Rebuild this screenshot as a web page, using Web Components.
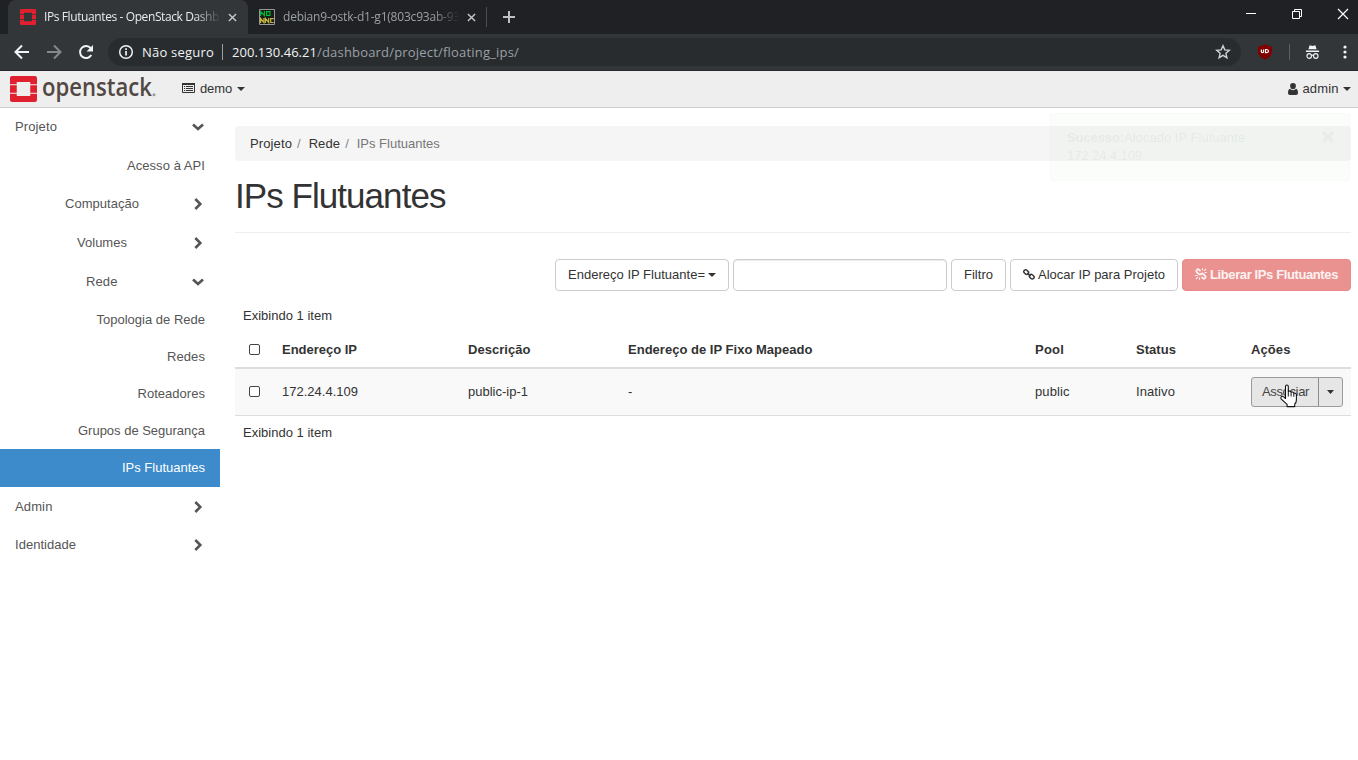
<!DOCTYPE html>
<html lang="pt-BR">
<head>
<meta charset="utf-8">
<title>IPs Flutuantes - OpenStack Dashboard</title>
<style>
html,body{margin:0;height:100%;overflow:hidden;background:#fff}
body{font:13px/18px "Liberation Sans",Arial,sans-serif;color:#333}
</style>
</head>
<body>
<os-app></os-app>
<script>
function define(name, markup, setup) {
  const template = document.createElement('template');
  template.innerHTML = markup;
  customElements.define(name, class extends HTMLElement {
    connectedCallback() {
      if (this.shadowRoot) return;
      this.attachShadow({mode: 'open'}).append(template.content.cloneNode(true));
      if (setup) setup(this, this.shadowRoot);
    }
  });
}

// Text label tracked to a given width.
define('t-label', `<style>:host{display:inline-block;white-space:pre;flex:none}span{display:inline-block}</style><span><slot></slot></span>`, (el, root) => {
  const span = root.querySelector('span');
  const w = parseFloat(el.getAttribute('w'));
  if (!w) return;
  const n = el.textContent.length;
  span.style.letterSpacing = ((w - span.getBoundingClientRect().width) / n) + 'px';
});

const icons = {
  logo: ['0 0 26 26', '<path fill="#e0202f" d="M2 0h22q2 0 2 2v6.200h-6.500V6h-13v2.200H0V2Q0 0 2 0zM0 9.300h6.500v7.400H0zM19.500 9.300H26v7.400h-6.500zM0 17.800h6.500V20h13v-2.200H26V24q0 2-2 2H2q-2 0-2-2z"/>'],
  close: ['0 0 10 10', '<path d="M1 1l8 8M9 1l-8 8" fill="none" stroke="currentColor" stroke-width="1.600"/>'],
  times: ['0 0 10 10', '<path d="M1 1l8 8M9 1l-8 8" fill="none" stroke="currentColor" stroke-width="2.800"/>'],
  plus: ['0 0 12 12', '<path d="M6 0v12M0 6h12" fill="none" stroke="currentColor" stroke-width="2"/>'],
  back: ['0 0 16 16', '<path d="M15 8H2M8 1.500L1.500 8 8 14.500" fill="none" stroke="currentColor" stroke-width="2"/>'],
  fwd: ['0 0 16 16', '<path d="M1 8h13M8 1.500L14.500 8 8 14.500" fill="none" stroke="currentColor" stroke-width="2"/>'],
  reload: ['0 0 16 16', '<path d="M13.300 11A6 6 0 1 1 12.700 4.200" fill="none" stroke="currentColor" stroke-width="2"/><path fill="currentColor" d="M15 1v6.500H8.500z"/>'],
  info: ['0 0 16 16', '<circle cx="8" cy="8" r="6.300" fill="none" stroke="currentColor" stroke-width="1.500"/><path fill="currentColor" d="M7.200 7h1.700v4.500H7.200zM7.200 4.300h1.700V6H7.200z"/>'],
  star: ['0 0 16 16', '<path d="M8 1.800l1.800 4.100 4.500.4-3.400 3 1 4.400L8 11.400l-3.900 2.300 1-4.400-3.400-3 4.500-.4z" fill="none" stroke="currentColor" stroke-width="1.400"/>'],
  incog: ['0 0 16 16', '<path fill="currentColor" d="M5 1.300l3 .7 3-.7 1.400 4H3.600zM1 6.500h14v1.400H1z"/><g fill="none" stroke="currentColor" stroke-width="1.200"><circle cx="4.500" cy="12" r="2.400"/><circle cx="11.500" cy="12" r="2.400"/><path d="M6.800 11.500q1.200-.8 2.400 0"/></g>'],
  dots: ['0 0 4 14', '<g fill="currentColor"><circle cx="2" cy="2" r="1.600"/><circle cx="2" cy="7" r="1.600"/><circle cx="2" cy="12" r="1.600"/></g>'],
  min: ['0 0 10 10', '<path fill="currentColor" d="M0 4h10v1H0z"/>'],
  restore: ['0 0 10 10', '<path d="M.5 2.500h7v7h-7zM2.500 2.500v-2h7v7h-2" fill="none" stroke="currentColor"/>'],
  wclose: ['0 0 10 10', '<path d="M0 0l10 10M10 0L0 10" fill="none" stroke="currentColor" stroke-width="1.200"/>'],
  list: ['0 0 13 10', '<path fill="none" stroke="currentColor" d="M.5.5h12v9H.5z"/><path fill="currentColor" d="M0 0h13v2H0zM2 3h1.200v1H2zm2 0h7v1H4zM2 5h1.200v1H2zm2 0h7v1H4zM2 7h1.200v1H2zm2 0h7v1H4z"/>'],
  caret: ['0 0 8 4', '<path fill="currentColor" d="M0 0h8L4 4z"/>'],
  user: ['0 0 10 12', '<path fill="currentColor" d="M5 0a2.900 2.900 0 0 1 2.900 3C7.900 5 6.600 6.300 5 6.300S2.100 5 2.100 3A2.900 2.900 0 0 1 5 0zM2 5.700C3.500 7.600 6.500 7.600 8 5.700c1.500.4 2 2 2 4.300 0 1.300-.8 2-2 2H2c-1.200 0-2-.7-2-2 0-2.300.5-3.900 2-4.300z"/>'],
  down: ['0 0 12 8', '<path d="M1 1.500l5 4.500 5-4.500" fill="none" stroke="currentColor" stroke-width="2.600"/>'],
  right: ['0 0 8 12', '<path d="M1.300 1l5 5-5 5" fill="none" stroke="currentColor" stroke-width="2.600"/>'],
  link: ['0 0 12 12', '<g fill="none" stroke="currentColor" stroke-width="1.500"><rect x="-2.600" y="-1.900" width="5.200" height="3.800" rx="1.700" transform="translate(3.200 3.400) rotate(45)"/><rect x="-2.600" y="-1.900" width="5.200" height="3.800" rx="1.700" transform="translate(8.700 8.400) rotate(45)"/><path d="M4.300 4.300l3.400 3.400"/></g>'],
  unlink: ['0 0 12 12', '<g fill="none" stroke="currentColor" stroke-width="1.800"><path d="M5.500 3.200L4 1.700Q2.900.8 1.800 1.800t0 2.300l2 2Q5 7 6 6M6.500 8.800L8 10.300q1.100.9 2.200-.1t0-2.300l-2-2Q7 5 6 6"/></g><path d="M7.500.2v2.300M9.200 2.800l1.900-1.900M9.500 4.500h2.300M4.500 9.500v2.300M2.800 9.200L.9 11.100M.2 7.500h2.300" stroke="currentColor" stroke-width="1.100"/>'],
  ublock: ['0 0 16 16', '<path fill="#800000" d="M8 .3Q11 2.200 15 2.400v5.200q0 5.200-7 8.100-7-2.900-7-8.100V2.400Q5 2.200 8 .3z"/><path d="M4.300 5.500v2q0 1.200 1.100 1.200T6.500 7.500v-2M8.500 5.500v3.200h1.200q1.800-.2 1.800-1.600T9.700 5.500z" fill="none" stroke="#fff" stroke-width="1.200"/>'],
  novnc: ['0 0 16 16', '<path fill="#1a1a1a" stroke="#999" d="M.5.500h15v15H.5z"/><path fill="none" stroke="#00b838" stroke-width="1.200" d="M1.600 7V2.500L5.400 6.500V2M7.600 2.600h3.400v3.800H7.600z"/><path fill="none" stroke="#c6b83a" stroke-width="1.200" d="M1.600 14V9.500L4.900 13.500V9M6.400 14V9.500L9.700 13.500V9M14.700 9.600h-3v3.900h3"/>'],
  hand: ['0 0 17 24', '<path d="M5.500 14.500V2.500Q5.500 1 6.900 1t1.400 1.500V7.500q.6-.6 1.500-.4 1.200.1 1.300 1.200.5-.5 1.400-.3 1 .2 1.100 1.300.6-.4 1.600 0t1.200 1.300v5.300q0 2.500-1.700 4.300v2.400H7.100v-2.300L1.300 15.200q-1.100-1.600.1-2.600 1.100-.8 2.300.2z" fill="#fff" stroke="#111" stroke-width="1.100" stroke-linejoin="round"/><path d="M8.300 7.500v5M11.100 8.500v4M13.800 9.500v3.300" stroke="#111"/>']
};
define('ui-icon', `<style>:host{display:block;flex:none}svg{display:block;width:100%;height:100%;overflow:visible}</style><svg></svg>`, (el, root) => {
  const [box, body] = icons[el.getAttribute('name')];
  const svg = root.querySelector('svg');
  svg.setAttribute('viewBox', box);
  svg.setAttribute('preserveAspectRatio', 'none');
  svg.innerHTML = body;
  el.style.width = el.getAttribute('w') + 'px';
  el.style.height = el.getAttribute('h') + 'px';
});

define('browser-tab', `<style>
:host{display:flex;box-sizing:border-box;align-items:center;height:34px;width:240px;padding:0 11.500px 0 12px;color:#9aa0a6;font-size:12px}
:host([active]){background:#323639;color:#e8eaed;border-radius:8px 8px 0 0}
.t{width:176px;margin-left:8px;overflow:hidden;-webkit-mask-image:linear-gradient(90deg,#000 150px,transparent 177px);mask-image:linear-gradient(90deg,#000 150px,transparent 177px)}
ui-icon[name=close]{margin-left:auto;color:#c4c7ca}
</style><slot name="icon"></slot><div class="t"><slot></slot></div><ui-icon name="close" w="9" h="9"></ui-icon>`);

define('browser-chrome', `<style>
:host{display:block;font-family:"Open Sans","Noto Sans",sans-serif;background:#323639}
.strip{height:34px;background:#202124;display:flex;align-items:center;padding-left:8px}
.sep{width:1px;height:20px;background:#4b4d51}
.plus{margin-left:16px;color:#bdc1c6}
.win{margin-left:auto;display:flex;gap:36px;color:#fff;padding:0 10px 6px 0}
.bar{display:flex;align-items:center;padding-left:14px;color:#f1f3f4;border-bottom:1px solid #25272a;box-sizing:border-box;height:37px}
.bar>ui-icon{margin-right:16px}
.omni{display:flex;align-items:center;width:1133px;box-sizing:border-box;height:28px;border-radius:14px;background:#282c2f;padding:0 10px;font-size:13px;margin-left:-2px}
.v{width:1px;height:16px;background:#9aa0a6;margin:0 9px 0 8px}
.path{color:#9aa0a6}
.omni ui-icon[name=star]{margin-left:auto;color:#d0d3d6}
.bar .u{margin:0 16px 0 16px}
.s2{width:1px;height:16px;background:#5c6064;margin-right:15px}
</style>
<div class="strip">
<browser-tab active><ui-icon slot="icon" name="logo" w="16" h="16"></ui-icon><t-label w="175">IPs Flutuantes - OpenStack Dashb</t-label></browser-tab>
<browser-tab style="width:238px;padding:0 10px 0 11px"><ui-icon slot="icon" name="novnc" w="16" h="16"></ui-icon><t-label w="177">debian9-ostk-d1-g1(803c93ab-93</t-label></browser-tab>
<div class="sep"></div><ui-icon class="plus" name="plus" w="12" h="12"></ui-icon>
<div class="win"><ui-icon name="min" w="10" h="10"></ui-icon><ui-icon name="restore" w="10" h="10"></ui-icon><ui-icon name="wclose" w="10" h="10"></ui-icon></div>
</div>
<div class="bar"><ui-icon name="back" w="16" h="16"></ui-icon><ui-icon name="fwd" w="16" h="16" style="color:#85888b"></ui-icon><ui-icon name="reload" w="16" h="16"></ui-icon>
<div class="omni"><ui-icon name="info" w="16" h="16" style="margin-right:8px"></ui-icon><t-label w="72">Não seguro</t-label><span class="v"></span><t-label w="85">200.130.46.21</t-label><t-label class="path" w="202">/dashboard/project/floating_ips/</t-label><ui-icon name="star" w="16" h="16"></ui-icon></div>
<ui-icon class="u" name="ublock" w="16" h="16"></ui-icon><span class="s2"></span><ui-icon name="incog" w="15" h="16" style="margin-right:22.500px"></ui-icon><ui-icon name="dots" w="4" h="14" style="margin:0"></ui-icon></div>`);

define('os-header', `<style>
:host{display:flex;align-items:center;height:36px;background:#eee;border-bottom:1px solid #ccc;padding:0 7px 0 10px}
.word{width:116px;height:34px;margin-left:5px;overflow:visible}
text{font:600 25px/34px "Open Sans",sans-serif;fill:#514844}
.u{margin-left:auto}
</style><ui-icon name="logo" w="27" h="26"></ui-icon>
<svg class="word" viewBox="0 0 116 34"><text x="0" y="24" textLength="110" lengthAdjust="spacingAndGlyphs">openstack</text><circle cx="112" cy="22.700" r="1.500" fill="#999"/></svg>
<ui-icon name="list" w="13" h="10" style="margin:-2px 5px 0 24px"></ui-icon><t-label w="32">demo</t-label><ui-icon name="caret" w="8" h="4" style="margin-left:5px"></ui-icon>
<ui-icon class="u" name="user" w="10" h="12"></ui-icon><t-label w="36" style="margin-left:4.500px">admin</t-label><ui-icon name="caret" w="8" h="4" style="margin-left:4.500px"></ui-icon>`);

define('nav-item', `<style>
:host{display:flex;align-items:center;box-sizing:border-box;height:38px;padding:0 15px;color:#555}
:host([leaf]){justify-content:flex-end}
:host([active]){background:#3d8bca;color:#fff}
i{width:12px;margin:0 1px 0 auto;display:flex;justify-content:center}
:host([leaf]) i{display:none}
</style><slot></slot><i></i>`, (el, root) => {
  if (el.hasAttribute('leaf')) return;
  const open = el.hasAttribute('open');
  root.querySelector('i').innerHTML = open ? '<ui-icon name="down" w="12" h="8"></ui-icon>' : '<ui-icon name="right" w="8" h="12"></ui-icon>';
});

define('side-nav', `<style>:host{display:block;width:220px;flex:none}[low]{padding-top:2px}</style>
<nav-item open><t-label w="42">Projeto</t-label></nav-item>
<nav-item leaf low><t-label w="78">Acesso à API</t-label></nav-item>
<nav-item style="height:39px;padding-left:65px"><t-label w="74">Computação</t-label></nav-item>
<nav-item style="height:39px;padding-left:77px"><t-label w="50">Volumes</t-label></nav-item>
<nav-item open low style="padding-left:86px"><t-label w="31.500">Rede</t-label></nav-item>
<nav-item leaf low><t-label w="108.500">Topologia de Rede</t-label></nav-item>
<nav-item leaf style="height:37px"><t-label w="38">Redes</t-label></nav-item>
<nav-item leaf style="height:37px"><t-label w="67.500">Roteadores</t-label></nav-item>
<nav-item leaf style="height:37px"><t-label w="127">Grupos de Segurança</t-label></nav-item>
<nav-item leaf active><t-label w="83">IPs Flutuantes</t-label></nav-item>
<nav-item low><t-label w="37.500">Admin</t-label></nav-item>
<nav-item low><t-label w="61">Identidade</t-label></nav-item>`);

define('os-button', `<style>
:host{display:flex;align-items:center;box-sizing:border-box;height:32px;border:1px solid #ccc;border-radius:4px;background:#fff;padding:0 12px;color:#333;flex:none}
:host([danger]){background:#ea928f;border-color:#e88a87;color:#fdf2f2;font-weight:bold}
</style><slot></slot>`);

define('check-box', `<style>:host{display:block;box-sizing:border-box;width:11px;height:11px;border:1px solid #444;border-radius:2px;background:#fff}</style>`);

define('table-row', `<style>
:host{display:grid;grid-template-columns:39px 186px 160px 407px 101px 115px 108px;align-items:center;height:46px;background:#f9f9f9;border-bottom:1px solid #ddd}
:host([head]){height:34px;background:none;border-bottom:2px solid #ddd;font-weight:bold}
::slotted(*){margin-left:8px}
::slotted(check-box){margin-left:14px;margin-bottom:1px}
</style><slot></slot>`);

define('split-button', `<style>
:host{display:flex;box-sizing:border-box;width:92px;height:30px;border:1px solid #9b9b9b;border-radius:3px;background:#e6e6e6;position:relative}
.a{width:67px;border-right:1px solid #8c8c8c;display:flex;align-items:center;padding-left:10px;box-sizing:border-box;color:#444}
.b{flex:1;display:flex;align-items:center;justify-content:center}
.hand{position:absolute;left:28px;top:6px}
</style><div class="a"><t-label w="47">Associar</t-label></div><div class="b"><ui-icon name="caret" w="7" h="4"></ui-icon></div><ui-icon class="hand" name="hand" w="17" h="24"></ui-icon>`);

define('toast-message', `<style>
:host{position:absolute;left:1050px;top:113px;width:300px;height:68px;box-sizing:border-box;border:1px solid rgba(200,220,190,.08);border-radius:4px;background:rgba(215,235,210,.09);color:rgba(60,100,60,.085);padding:15px 16px}
.x{position:absolute;right:15px;top:17px;opacity:.5}
div{height:18px}
</style><div><b><t-label w="57">Sucesso:</t-label></b><t-label w="121">Alocado IP Flutuante</t-label></div><div><t-label w="75">172.24.4.109</t-label></div><ui-icon class="x" name="times" w="12" h="12"></ui-icon>`);

define('page-content', `<style>
:host{display:block;flex:1;padding:18px 7px 0 15px}
.crumb{height:35px;box-sizing:border-box;background:#f5f5f5;border-radius:4px;display:flex;align-items:center;padding:0 15px}
.s{color:#888;margin:0 8px 0 5px}.cur{color:#777}
h1{font-weight:normal;font-size:35px;line-height:40px;margin:15px 0 16px;height:40px}
hr{border:0;border-top:1px solid #eee;margin:0 0 26px}
.tools{display:flex;justify-content:flex-end;gap:4px}
.in{width:214px;height:32px;box-sizing:border-box;border:1px solid #ccc;border-radius:4px;box-shadow:inset 0 1px 1px rgba(0,0,0,.075)}
.cap{padding:16px 8px 8px;height:18px}
.cap.f{padding-top:8px}
</style>
<div class="crumb"><t-label w="42">Projeto</t-label><span class="s">/</span><t-label w="31.500">Rede</t-label><span class="s">/</span><t-label class="cur" w="83">IPs Flutuantes</t-label></div>
<h1><t-label w="210.500">IPs Flutuantes</t-label></h1><hr>
<div class="tools">
<os-button><t-label w="137">Endereço IP Flutuante=</t-label><ui-icon name="caret" w="8" h="4" style="margin-left:3px"></ui-icon></os-button>
<div class="in"></div>
<os-button><t-label w="29">Filtro</t-label></os-button>
<os-button><ui-icon name="link" w="12" h="11" style="margin-top:-2px"></ui-icon><t-label w="127" style="margin-left:3px">Alocar IP para Projeto</t-label></os-button>
<os-button danger><ui-icon name="unlink" w="12" h="12" style="margin-top:-2px"></ui-icon><t-label w="128" style="margin-left:3px">Liberar IPs Flutuantes</t-label></os-button>
</div>
<div class="cap"><t-label w="89">Exibindo 1 item</t-label></div>
<table-row head><check-box></check-box><t-label w="75">Endereço IP</t-label><t-label w="62.500">Descrição</t-label><t-label w="184.500">Endereço de IP Fixo Mapeado</t-label><t-label w="29">Pool</t-label><t-label w="40">Status</t-label><t-label w="39.500">Ações</t-label></table-row>
<table-row><check-box></check-box><t-label w="76">172.24.4.109</t-label><t-label w="60">public-ip-1</t-label><t-label>-</t-label><t-label w="34.500">public</t-label><t-label w="39">Inativo</t-label><split-button></split-button></table-row>
<div class="cap f"><t-label w="89">Exibindo 1 item</t-label></div>`);

define('os-app', `<style>:host{display:block;position:relative;height:760px;overflow:hidden;background:#fff}.m{display:flex}</style>
<browser-chrome></browser-chrome><os-header></os-header><div class="m"><side-nav></side-nav><page-content></page-content></div><toast-message></toast-message>`);
</script>
</body>
</html>
